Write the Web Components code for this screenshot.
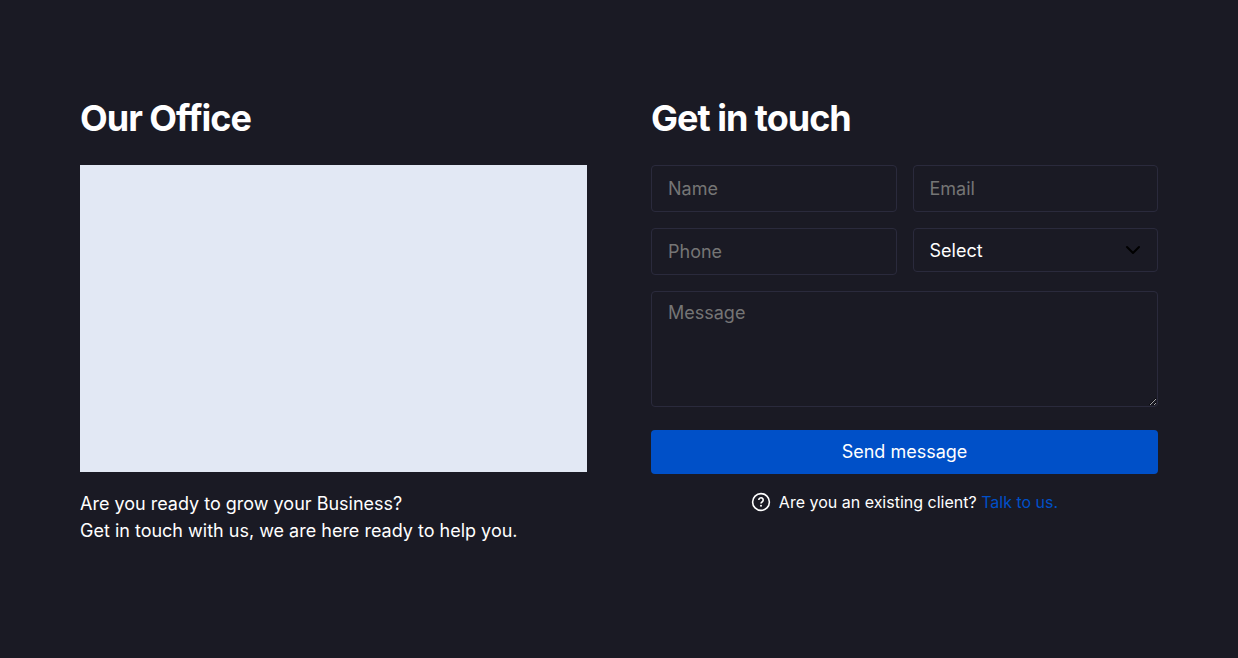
<!DOCTYPE html>
<html lang="en">
<head>
<meta charset="utf-8">
<title>Contact</title>
<style>
body { margin: 0; background: #1a1a24; color: #fff; font: 18px/27px Inter, "Liberation Sans", sans-serif; }
</style>
</head>
<body>
<contact-section>
  <office-info slot="office">
    <span slot="question">Are you ready to grow your Business?</span>
    <span slot="answer">Get in touch with us, we are here ready to help you.</span>
  </office-info>
  <contact-form slot="form"></contact-form>
</contact-section>
<script>
class BaseElement extends HTMLElement {
  constructor() {
    super();
    this.attachShadow({ mode: "open" }).innerHTML = this.constructor.markup;
  }
}

class ContactSection extends BaseElement {
  static markup = `
    <style>
      :host { display: block; padding: 96px 80px; }
      main { display: grid; grid-template-columns: 1fr 1fr; gap: 64px; align-items: start; }
      ::slotted(*) { min-width: 0; }
      @media (max-width: 760px) { :host { padding: 48px 24px; } main { grid-template-columns: 1fr; } }
    </style>
    <main><slot name="office"></slot><slot name="form"></slot></main>`;
}

class SectionTitle extends BaseElement {
  static markup = `
    <style>
      :host { display: block; margin-bottom: 24px; }
      h2 { margin: 0; font-size: 36px; line-height: 45px; font-weight: 700; letter-spacing: -1px; }
    </style>
    <h2><slot></slot></h2>`;
}

class OfficeInfo extends BaseElement {
  static markup = `
    <style>
      :host { display: block; }
      .map { background: #e2e8f4; aspect-ratio: 507 / 307; margin-bottom: 18px; }
      p { margin: 0; }
      ::slotted(span) { display: block; }
    </style>
    <section-title>Our Office</section-title>
    <div class="map" role="img" aria-label="Office map"></div>
    <p><slot name="question"></slot><slot name="answer"></slot></p>`;
}

class FormField extends HTMLElement {
  connectedCallback() {
    const type = this.getAttribute("type");
    const label = this.getAttribute("label");
    const control = {
      select: `<div class="select"><select id="c" aria-label="${label}"><option>Select</option></select>
        <svg viewBox="0 0 16 16" width="16" height="16" aria-hidden="true"><path d="M2 5l6 6 6-6" fill="none" stroke="#000" stroke-width="2" stroke-linecap="round" stroke-linejoin="round"/></svg></div>`,
      textarea: `<textarea id="c" aria-label="${label}" placeholder="${label}"></textarea>`
    }[type] || `<input id="c" type="${type}" aria-label="${label}" placeholder="${label}">`;
    this.attachShadow({ mode: "open" }).innerHTML = `
      <style>
        :host { display: block; min-width: 0; }
        input, select, textarea { display: block; box-sizing: border-box; width: 100%; margin: 0; padding: 8px 16px; border: 1px solid #2a2a3c; border-radius: 4px; background: transparent; color: #fff; font: inherit; outline: 0; }
        input { height: 47px; }
        select { height: 44px; padding-bottom: 10px; appearance: none; }
        textarea { height: 116px; line-height: 25px; resize: vertical; }
        ::placeholder { color: #757575; opacity: 1; }
        .select { position: relative; }
        svg { position: absolute; right: 17px; top: 14px; pointer-events: none; }
      </style>${control}`;
  }
}

class SubmitButton extends BaseElement {
  static markup = `
    <style>
      :host { display: block; }
      button { display: block; width: 100%; height: 44px; padding: 0 16px 2px; border: 0; border-radius: 4px; background: #0050c8; color: #fff; font: inherit; cursor: pointer; }
    </style>
    <button type="button"><slot></slot></button>`;
}

class ClientHint extends BaseElement {
  static markup = `
    <style>
      :host { display: flex; justify-content: center; align-items: center; gap: 8px; font-size: 16px; line-height: 24px; }
      svg { flex: none; }
      a { color: #0050c8; text-decoration: none; }
    </style>
    <svg viewBox="0 0 20 20" width="20" height="20" fill="none" stroke="#fff" aria-hidden="true"><circle cx="10" cy="10" r="8.4" stroke-width="1.6"/><path d="M7.8 8a2.2 2.2 0 1 1 3.5 1.8c-.8.5-1.3.9-1.3 1.8" stroke-width="1.6"/><circle cx="10" cy="13.8" r="1" fill="#fff" stroke="none"/></svg>
    <span><slot></slot> <a href="#talk">Talk to us.</a></span>`;
}

class ContactForm extends BaseElement {
  static markup = `
    <style>
      :host { display: block; }
      form { margin: 0; }
      .fields { display: grid; grid-template-columns: 1fr 1fr; gap: 16px; align-items: start; }
      .wide { grid-column: 1 / -1; }
      submit-button { margin: 23px 0 16px; }
    </style>
    <section-title>Get in touch</section-title>
    <form>
      <div class="fields">
        <form-field type="text" label="Name"></form-field>
        <form-field type="email" label="Email"></form-field>
        <form-field type="tel" label="Phone"></form-field>
        <form-field type="select" label="Subject"></form-field>
        <form-field class="wide" type="textarea" label="Message"></form-field>
      </div>
      <submit-button>Send message</submit-button>
    </form>
    <client-hint>Are you an existing client?</client-hint>`;
}

customElements.define("section-title", SectionTitle);
customElements.define("form-field", FormField);
customElements.define("submit-button", SubmitButton);
customElements.define("client-hint", ClientHint);
customElements.define("office-info", OfficeInfo);
customElements.define("contact-form", ContactForm);
customElements.define("contact-section", ContactSection);
</script>
</body>
</html>
